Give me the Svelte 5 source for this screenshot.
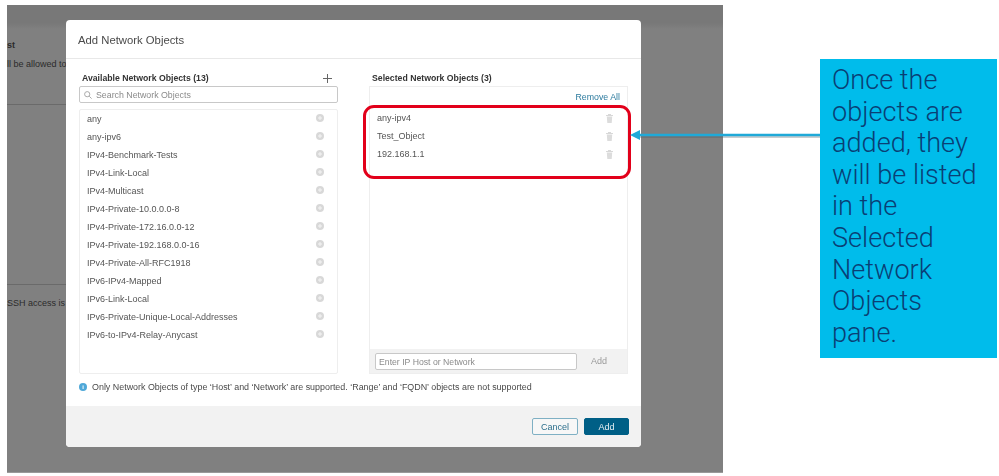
<script>
  const available = [
    'any',
    'any-ipv6',
    'IPv4-Benchmark-Tests',
    'IPv4-Link-Local',
    'IPv4-Multicast',
    'IPv4-Private-10.0.0.0-8',
    'IPv4-Private-172.16.0.0-12',
    'IPv4-Private-192.168.0.0-16',
    'IPv4-Private-All-RFC1918',
    'IPv6-IPv4-Mapped',
    'IPv6-Link-Local',
    'IPv6-Private-Unique-Local-Addresses',
    'IPv6-to-IPv4-Relay-Anycast'
  ];
  const selected = ['any-ipv4', 'Test_Object', '192.168.1.1'];
</script>

<div class="stage">
  <div class="backdrop">
    <div class="behind">
      <b class="b-title">st</b>
      <p class="b-line">ll be allowed to</p>
      <hr class="rule-a" />
      <hr class="rule-b" />
      <p class="b-line ssh">SSH access is c</p>
    </div>

    <div class="modal">
      <div class="modal-head">Add Network Objects</div>
      <div class="modal-body">
        <div class="columns">
          <section class="col">
            <div class="col-title">
              <span>Available Network Objects (13)</span>
              <svg class="plus" width="9" height="9" viewBox="0 0 9 9"><path d="M4.5 0v9M0 4.5h9" stroke="#666" stroke-width="1" /></svg>
            </div>
            <div class="search">
              <svg width="8" height="8" viewBox="0 0 8 8" fill="none" stroke="#aaa" stroke-width="1"><circle cx="3.2" cy="3.2" r="2.6" /><path d="M5.2 5.2 7.6 7.6" /></svg>
              <span>Search Network Objects</span>
            </div>
            <ul class="list avail">
              {#each available as name}
                <li>
                  <span>{name}</span>
                  <svg class="add-ic" width="8" height="8" viewBox="0 0 8 8"><circle cx="4" cy="4" r="4" fill="#d8d8d8" /><path d="M4 2v4M2 4h4" stroke="#f4f4f4" stroke-width="1" /></svg>
                </li>
              {/each}
            </ul>
          </section>

          <section class="col">
            <div class="col-title"><span>Selected Network Objects (3)</span></div>
            <div class="sel-box">
              <div class="remove-all">Remove All</div>
              <ul class="list chosen">
                {#each selected as name}
                  <li>
                    <span>{name}</span>
                    <svg class="trash" width="7" height="9" viewBox="0 0 7 9"><path d="M0 1h7v1H0zM2 0h3v1H2z" fill="#d8d8d8" /><path d="M.8 2.6h5.4L5.7 9H1.3z" fill="#dcdcdc" /></svg>
                  </li>
                {/each}
              </ul>
              <div class="enter-bar">
                <div class="enter-input">Enter IP Host or Network</div>
                <span class="enter-add">Add</span>
              </div>
            </div>
          </section>
        </div>

        <div class="info">
          <span class="info-ic">i</span>
          <span>Only Network Objects of type ‘Host’ and ‘Network’ are supported. ‘Range’ and ‘FQDN’ objects are not supported</span>
        </div>
      </div>
      <div class="modal-foot">
        <button class="btn cancel">Cancel</button>
        <button class="btn add">Add</button>
      </div>
    </div>
  </div>

  <div class="callout">Once the objects are added, they will be listed in the Selected Network Objects pane.</div>

  <div class="highlight"></div>
  <svg class="arrow" width="192" height="16" viewBox="0 0 192 16">
    <path d="M10 10H190" stroke="#4a5a60" stroke-opacity=".3" stroke-width="2" />
    <path d="M8 8H190" stroke="#1fa9d8" stroke-width="2.5" />
    <path d="M0 8 10 3V13Z" fill="#1fa9d8" />
  </svg>
</div>

<style>
  :global(body) {
    margin: 0;
    background: #fff;
  }

  .stage {
    position: relative;
    width: 999px;
    height: 476px;
    display: flex;
    align-items: flex-start;
    padding: 5px 0 0 7px;
    box-sizing: border-box;
    font-family: "Liberation Sans", Arial, sans-serif;
    overflow: hidden;
  }

  .backdrop {
    position: relative;
    width: 716px;
    height: 468px;
    flex: none;
    background: linear-gradient(#787878 0, #787878 18px, #808080 24px);
    border-bottom: 1px solid #9a9a9a;
    box-sizing: border-box;
  }

  .behind {
    width: 59px;
    padding-top: 35px;
    font-size: 9px;
    color: #2b2b2b;
    white-space: nowrap;
  }

  .b-title {
    display: block;
    line-height: 10px;
  }

  .b-line {
    margin: 9px 0 0;
    line-height: 11px;
  }

  .ssh {
    margin-top: 13px;
  }

  .behind hr {
    border: 0;
    border-top: 1px solid #6a6a6a;
    margin: 0;
  }

  .rule-a {
    margin-top: 34px !important;
  }

  .rule-b {
    margin-top: 179px !important;
  }

  .modal {
    position: absolute;
    left: 59px;
    top: 15px;
    width: 575px;
    height: 427px;
    background: #fff;
    border-radius: 4px;
    display: flex;
    flex-direction: column;
    overflow: hidden;
    filter: blur(0.3px);
  }

  .modal-head {
    height: 38px;
    padding-left: 12px;
    line-height: 40px;
    font-size: 11.3px;
    color: #4a4a4a;
    border-bottom: 1px solid #e8e8e8;
    flex: none;
  }

  .modal-body {
    flex: 1;
    padding: 13px 13px 0;
  }

  .columns {
    display: flex;
    gap: 31px;
    height: 302px;
  }

  .col {
    width: 259px;
    display: flex;
    flex-direction: column;
  }

  .col-title {
    height: 14px;
    line-height: 12px;
    padding: 0 6px 0 3px;
    display: flex;
    justify-content: space-between;
    align-items: flex-start;
    font-size: 8.7px;
    font-weight: bold;
    color: #333;
  }

  .plus {
    margin-top: 2px;
  }

  .search {
    height: 17px;
    box-sizing: border-box;
    border: 1px solid #c8c8c8;
    border-radius: 2px;
    margin-bottom: 6px;
    padding-left: 4px;
    display: flex;
    align-items: center;
    gap: 4px;
    font-size: 8.8px;
    color: #8a8a8a;
  }

  .list {
    list-style: none;
    margin: 0;
    padding: 0;
    font-size: 9px;
    color: #555;
  }

  .list li {
    height: 18px;
    display: flex;
    align-items: center;
    justify-content: space-between;
  }

  .avail {
    flex: 1;
    border: 1px solid #eee;
    border-radius: 2px;
    padding-left: 7px;
    padding-right: 13px;
  }

  .add-ic {
    margin-bottom: 2px;
  }

  .sel-box {
    flex: 1;
    border: 1px solid #eee;
    display: flex;
    flex-direction: column;
  }

  .remove-all {
    height: 22px;
    line-height: 21px;
    text-align: right;
    padding-right: 7px;
    font-size: 8.8px;
    color: #2b7a9e;
  }

  .chosen {
    flex: 1;
    padding-left: 7px;
    padding-right: 14px;
  }

  .enter-bar {
    height: 24px;
    background: #f2f2f2;
    display: flex;
    align-items: center;
    padding-left: 5px;
    flex: none;
  }

  .enter-input {
    width: 202px;
    height: 17px;
    box-sizing: border-box;
    border: 1px solid #c8c8c8;
    border-radius: 2px;
    background: #fff;
    padding-left: 3px;
    line-height: 16px;
    font-size: 8.7px;
    color: #8a8a8a;
  }

  .enter-add {
    margin-left: 14px;
    font-size: 9px;
    color: #9a9a9a;
  }

  .info {
    margin-top: 6px;
    height: 14px;
    display: flex;
    align-items: center;
    gap: 5px;
    font-size: 8.92px;
    color: #4a4a4a;
  }

  .info-ic {
    width: 8px;
    height: 8px;
    border-radius: 50%;
    background: #4fa8d8;
    color: #fff;
    font-size: 6px;
    line-height: 8px;
    text-align: center;
    font-weight: bold;
    flex: none;
  }

  .modal-foot {
    height: 41px;
    flex: none;
    background: #f2f2f2;
    display: flex;
    justify-content: flex-end;
    align-items: flex-start;
    gap: 6px;
    padding: 12px 12px 0 0;
    box-sizing: border-box;
  }

  .btn {
    height: 17px;
    padding: 0;
    border-radius: 2px;
    font-family: inherit;
    font-size: 9px;
    box-sizing: border-box;
  }

  .cancel {
    width: 46px;
    background: #f7f7f7;
    border: 1px solid #7fb0c4;
    color: #2d6f8c;
  }

  .add {
    width: 45px;
    background: #005f86;
    border: 1px solid #005f86;
    color: #e8f1f5;
  }

  .callout {
    width: 177px;
    height: 299px;
    margin: 54px 0 0 97px;
    flex: none;
    box-sizing: border-box;
    background: #00bceb;
    color: #0a3f75;
    padding: 6px 8px 0 12px;
    font-family: Roboto, "Liberation Sans", sans-serif;
    font-weight: 300;
    font-size: 27.1px;
    line-height: 31.6px;
  }

  .highlight {
    position: absolute;
    left: 363px;
    top: 105px;
    width: 268px;
    height: 74px;
    box-sizing: border-box;
    border: 3px solid #e2001a;
    border-radius: 11px;
  }

  .arrow {
    position: absolute;
    left: 630px;
    top: 127px;
  }
</style>
